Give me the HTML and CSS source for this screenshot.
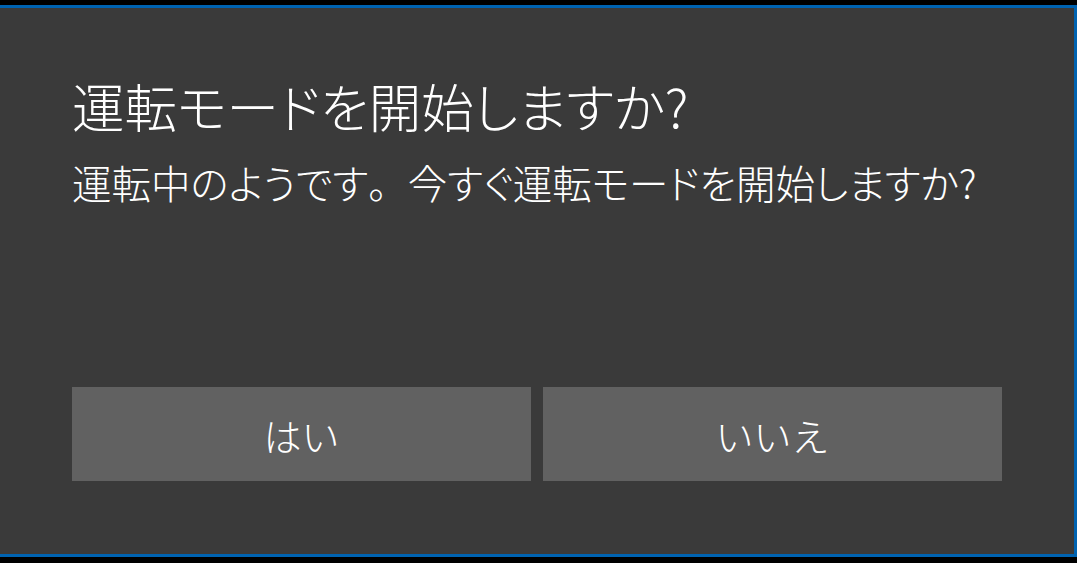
FILE: index.html
```html
<!DOCTYPE html>
<html lang="ja">
<head>
    <meta charset="UTF-8">
    <meta name="viewport" content="width=device-width, initial-scale=1.0">
    <title>運転モード</title>
    <link rel="stylesheet" href="styles.css">
</head>
<body>
<div class="dialog">
    <h1 class="title">運転モードを開始しますか?</h1>
    <p class="message">運転中のようです<span class="full">。</span>今すぐ運転モードを開始しますか?</p>
    <div class="btn-container">
        <button type="button" class="btn">はい</button>
        <button type="button" class="btn">いいえ</button>
    </div>
</div>
</body>
</html>
```

FILE: styles.css
```css
body {
    margin: 0;
    padding: 0;
    background-color: #000;
    font-family: "Noto Sans CJK JP", "Noto Sans", sans-serif;
    font-feature-settings: "palt";
}
.dialog {
    box-sizing: border-box;
    height: 552px;
    margin-top: 5px;
    padding: 67px 72px 73px 72px;
    display: flex;
    flex-direction: column;
    background-color: #3a3a3a;
    border-top: 3px solid #0063b1;
    border-right: 3px solid #0063b1;
    border-bottom: 3px solid #0063b1;
}
.title {
    margin: 0;
    font-size: 52.5px;
    font-weight: 300;
    line-height: 60px;
    color: #fff;
}
.message {
    margin: 22px 0 0 0;
    font-size: 39.5px;
    font-weight: 300;
    line-height: 50px;
    color: #fff;
}
.full {
    font-feature-settings: normal;
}
.btn-container {
    margin-top: auto;
    display: grid;
    grid-template-columns: 1fr 1fr;
    gap: 12px;
}
.btn {
    height: 94px;
    padding: 0;
    border: none;
    background-color: #616161;
    color: #fff;
    font-family: inherit;
    font-size: 38px;
    font-weight: 300;
    cursor: pointer;
}
```
